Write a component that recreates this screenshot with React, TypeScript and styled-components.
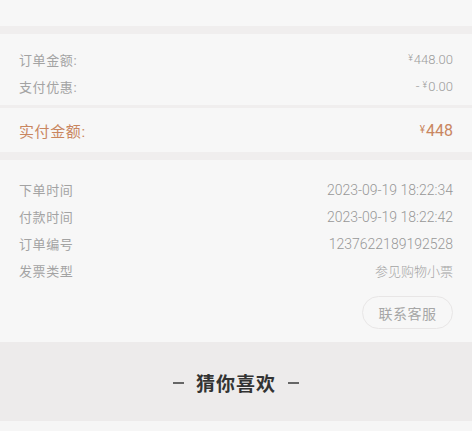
import React from "react";
import styled, { createGlobalStyle } from "styled-components";

const Global = createGlobalStyle`
  html, body { margin: 0; padding: 0; background: #f7f7f7; }
  body { font-family: Roboto, "Noto Sans CJK SC", sans-serif; }
  * { box-sizing: border-box; }
`;

const Page = styled.div`
  width: 472px;
  height: 431px;
  overflow: hidden;
  display: flex;
  flex-direction: column;
  background: #f0eeee;
`;

const Card = styled.section<{ $h?: number; $pt?: number; $pb?: number; $mt?: number }>`
  background: #f7f7f7;
  height: ${(p) => (p.$h ? `${p.$h}px` : "auto")};
  margin-top: ${(p) => p.$mt ?? 0}px;
  padding: ${(p) => p.$pt ?? 0}px 19px ${(p) => p.$pb ?? 0}px 19px;
  display: flex;
  flex-direction: column;
`;

const Row = styled.div<{ $h?: number }>`
  height: ${(p) => p.$h ?? 27}px;
  display: flex;
  align-items: center;
  justify-content: space-between;
`;

const Label = styled.span<{ $accent?: boolean }>`
  font-size: ${(p) => (p.$accent ? 15 : 13)}px;
  color: ${(p) => (p.$accent ? "#c9865f" : "#a3a3a3")};
  letter-spacing: 0.6px;
`;

const Value = styled.span<{ $tone?: string; $size?: number; $weight?: number }>`
  font-size: ${(p) => p.$size ?? 14}px;
  color: ${(p) => p.$tone ?? "#979797"};
  font-weight: ${(p) => p.$weight ?? 300};
  display: inline-flex;
  align-items: baseline;
`;

const Yen = styled.span<{ $size?: number }>`
  font-size: ${(p) => p.$size ?? 9}px;
  position: relative;
  top: -3px;
  margin-right: 1px;
`;

const Actions = styled.div`
  display: flex;
  justify-content: flex-end;
  margin-top: 12px;
`;

const PillButton = styled.button`
  width: 91px;
  height: 33px;
  border: 1px solid #e8e6e6;
  border-radius: 17px;
  background: #f7f7f7;
  color: #a6a6a6;
  font-size: 14px;
  font-family: "Noto Sans CJK SC", sans-serif;
  letter-spacing: 0.5px;
  padding: 0;
`;

const Recommend = styled.div`
  height: 79px;
  background: #edebeb;
  display: flex;
  align-items: center;
  justify-content: center;
  gap: 12px;
  color: #333;
  padding-top: 2px;
`;

const Dash = styled.span`
  width: 11px;
  height: 2px;
  background: #666;
`;

const RecTitle = styled.span`
  font-size: 19px;
  font-weight: 700;
  font-family: "Noto Sans CJK SC", sans-serif;
  letter-spacing: 1px;
`;

const Bottom = styled.div`
  flex: 1;
  background: #f6f6f6;
`;

export default function App() {
  return (
    <>
      <Global />
      <Page>
        <Card $h={26} />
        <Card $mt={8} $pt={12} $pb={5}>
          <Row>
            <Label>订单金额:</Label>
            <Value $tone="#9c9c9c" $size={13}>
              <Yen>¥</Yen>448.00
            </Value>
          </Row>
          <Row>
            <Label>支付优惠:</Label>
            <Value $tone="#9c9c9c" $size={13}>
              -&nbsp;<Yen>¥</Yen>0.00
            </Value>
          </Row>
        </Card>
        <Card $mt={3} $pt={8} $pb={8} $h={44}>
          <Row $h={28}>
            <Label $accent>实付金额:</Label>
            <Value $tone="#c9865f" $size={16} $weight={400}>
              <Yen $size={10}>¥</Yen>448
            </Value>
          </Row>
        </Card>
        <Card $mt={8} $pt={16} $pb={13}>
          <Row>
            <Label>下单时间</Label>
            <Value>2023-09-19 18:22:34</Value>
          </Row>
          <Row>
            <Label>付款时间</Label>
            <Value>2023-09-19 18:22:42</Value>
          </Row>
          <Row>
            <Label>订单编号</Label>
            <Value>1237622189192528</Value>
          </Row>
          <Row>
            <Label>发票类型</Label>
            <Value $tone="#a3a3a3" $size={13}>参见购物小票</Value>
          </Row>
          <Actions>
            <PillButton>联系客服</PillButton>
          </Actions>
        </Card>
        <Recommend>
          <Dash />
          <RecTitle>猜你喜欢</RecTitle>
          <Dash />
        </Recommend>
        <Bottom />
      </Page>
    </>
  );
}
